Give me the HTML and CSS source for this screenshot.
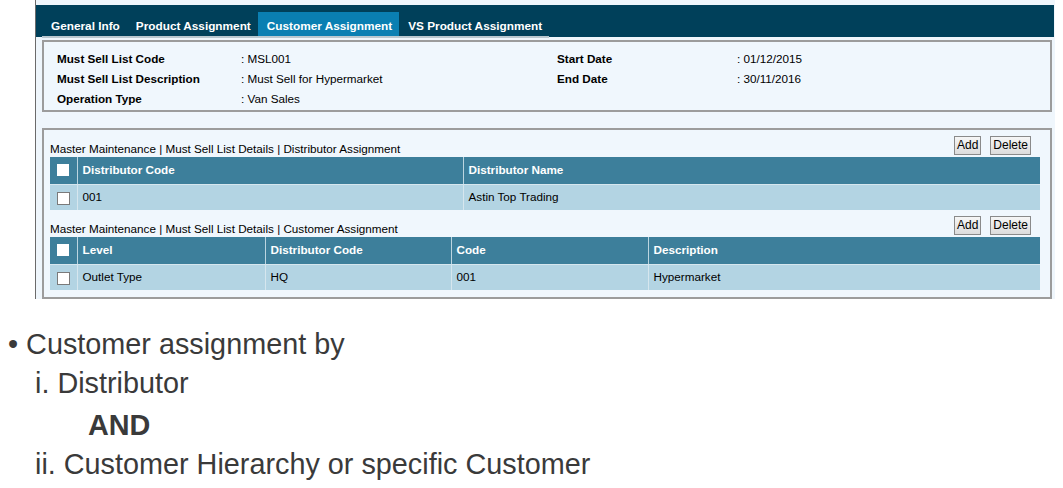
FILE: index.html
```html
<!DOCTYPE html>
<html>
<head>
<meta charset="utf-8">
<link rel="stylesheet" href="styles.css">
</head>
<body>
<div class="shot">
  <div class="band">
    <div class="tabs">
      <span class="tab">General Info</span>
      <span class="tab">Product Assignment</span>
      <span class="tab active">Customer Assignment</span>
      <span class="tab">VS Product Assignment</span>
    </div>
  </div>
  <div class="info">
    <div class="info-col">
      <div class="info-row"><span class="lbl">Must Sell List Code</span><span class="val">: MSL001</span></div>
      <div class="info-row"><span class="lbl">Must Sell List Description</span><span class="val">: Must Sell for Hypermarket</span></div>
      <div class="info-row"><span class="lbl">Operation Type</span><span class="val">: Van Sales</span></div>
    </div>
    <div class="info-col right">
      <div class="info-row"><span class="lbl">Start Date</span><span class="val">: 01/12/2015</span></div>
      <div class="info-row"><span class="lbl">End Date</span><span class="val">: 30/11/2016</span></div>
    </div>
  </div>
  <div class="detail">
    <div class="bar">
      <span class="crumb">Master Maintenance | Must Sell List Details | Distributor Assignment</span>
      <span class="btns"><button class="btn">Add</button><button class="btn">Delete</button></span>
    </div>
    <table class="grid">
      <tr class="head"><th class="chk"><span class="box"></span></th><th class="w1">Distributor Code</th><th>Distributor Name</th></tr>
      <tr class="row"><td class="chk"><span class="box"></span></td><td>001</td><td>Astin Top Trading</td></tr>
    </table>
    <div class="bar">
      <span class="crumb">Master Maintenance | Must Sell List Details | Customer Assignment</span>
      <span class="btns"><button class="btn">Add</button><button class="btn">Delete</button></span>
    </div>
    <table class="grid">
      <tr class="head"><th class="chk"><span class="box"></span></th><th class="c1">Level</th><th class="c2">Distributor Code</th><th class="c3">Code</th><th>Description</th></tr>
      <tr class="row"><td class="chk"><span class="box"></span></td><td>Outlet Type</td><td>HQ</td><td>001</td><td>Hypermarket</td></tr>
    </table>
  </div>
</div>
<div class="notes">
  <div class="note l1">• Customer assignment by</div>
  <div class="note l2 first">i. Distributor</div>
  <div class="note l3"><b>AND</b></div>
  <div class="note l2">ii. Customer Hierarchy or specific Customer</div>
</div>
</body>
</html>
```
FILE: styles.css
```css
html, body { margin: 0; padding: 0; background: #ffffff; }
body { font-family: "Liberation Sans", Arial, sans-serif; }

.shot {
  margin-left: 35px;
  width: 1020px;
  height: 299px;
  border-left: 1px solid #6b6b6b;
  background: #eff6fc;
  padding-top: 5px;
  box-sizing: border-box;
  font-size: 11.7px;
  color: #000;
}
.band {
  width: 1018px;
  height: 32px;
  background: #00405a;
  display: flex;
  align-items: flex-end;
  padding-left: 6px;
  box-sizing: border-box;
}
.tabs {
  display: flex;
  border-bottom: 2px solid #b9c7cf;
  height: 24px;
  box-sizing: content-box;
  margin-bottom: -1px;
}
.tab {
  color: #fff;
  font-weight: bold;
  font-size: 11.8px;
  padding: 7px 7px 0 9px;
  height: 24px;
  box-sizing: border-box;
}
.tab.active { background: #0a7fb2; padding: 7px 7px 0 9px; }

.info {
  margin: 3px 0 0 6px;
  width: 1010px;
  height: 72px;
  border: 2px solid #9c9c9c;
  box-sizing: border-box;
  background: #f0f7fd;
  display: flex;
  padding: 7px 0 0 13px;
}
.info-col { width: 500px; }
.info-col.right { width: 480px; }
.info-row { display: flex; height: 20px; line-height: 20px; }
.lbl { font-weight: bold; width: 184px; }
.right .lbl { width: 180px; }

.detail {
  margin: 16px 0 0 6px;
  width: 1010px;
  height: 171px;
  border: 2px solid #9c9c9c;
  box-sizing: border-box;
  background: #f0f7fd;
  padding: 6px 10px 0 6px;
}
.bar {
  display: flex;
  justify-content: space-between;
  align-items: flex-end;
  height: 21px;
}
.grid + .bar { margin-top: 6px; }
.crumb { font-size: 11.7px; line-height: 14px; padding-bottom: 1px; }
.btns { display: flex; gap: 9px; margin-right: 9px; align-self: flex-start; }
.btn {
  font-family: "Liberation Sans", Arial, sans-serif;
  font-size: 12px;
  height: 19px;
  padding: 0 2px;
  margin: 0;
  border: 1px solid #8a8a8a;
  background: linear-gradient(#f6f6f6, #dcdcdc);
  color: #000;
  line-height: 15px;
}
.grid {
  width: 990px;
  border-collapse: collapse;
  table-layout: fixed;
  font-size: 11.7px;
}
.grid th, .grid td {
  padding: 0 0 0 5px;
  text-align: left;
  vertical-align: middle;
  border-left: 1px solid #d6e6ee;
  box-sizing: border-box;
}
.grid th { height: 27px; padding-bottom: 2px; }
.grid td { height: 26px; padding-bottom: 2px; }
.grid tr > :first-child { border-left: none; }
.head th { background: #3d7f9b; color: #fff; font-weight: bold; border-bottom: 1px solid #d6e6ee; border-left-color: #bcd5e0; }
.row td { background: #b3d4e3; }
.grid .chk { width: 27px; padding: 0 0 0 7px; }
.w1 { width: 386px; }
.c1 { width: 188px; }
.c2 { width: 186px; }
.c3 { width: 197px; }
.box {
  display: block;
  width: 11px;
  height: 11px;
  background: #fff;
  border: 1px solid #7a7a7a;
}
.head .box { width: 12px; height: 12px; border: none; }
.row .box { margin-top: 2px; }

.notes {
  color: #3a3a3a;
  font-size: 28.8px;
  padding-top: 25px;
}
.note { height: 39px; line-height: 40px; }
.note.first { height: 42px; }
.l1 { padding-left: 8px; }
.l2 { padding-left: 35px; }
.l3 { padding-left: 88px; }
.l3 b { font-weight: bold; }
```
